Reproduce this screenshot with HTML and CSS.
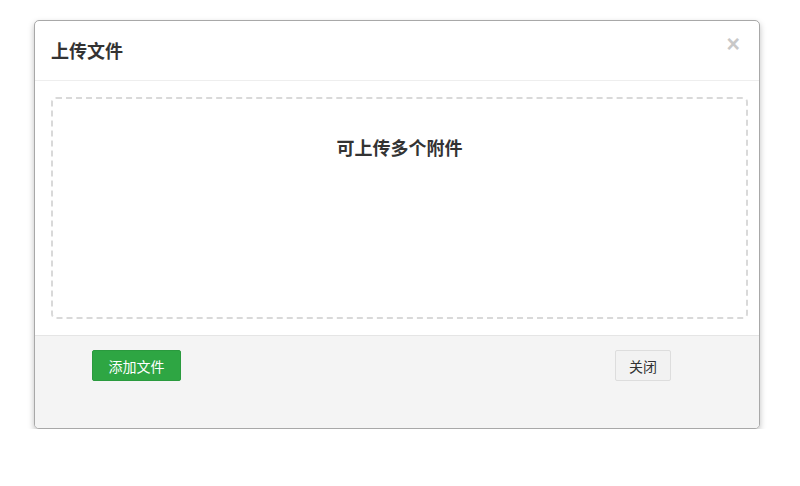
FILE: index.html
```html
<!DOCTYPE html>
<html lang="zh-CN">
<head>
    <meta charset="utf-8">
    <meta name="viewport" content="width=device-width, initial-scale=1.0">
    <title>上传文件</title>
    <link rel="stylesheet" href="styles.css">
</head>
<body>
    <div class="modal">
        <div class="modal-header">
            <h4 class="modal-title">上传文件</h4>
            <span class="close">&times;</span>
        </div>
        <div class="modal-body">
            <div class="dropzone">
                <p class="dz-message">可上传多个附件</p>
            </div>
        </div>
        <div class="modal-footer">
            <button class="btn btn-success">添加文件</button>
            <button class="btn btn-default">关闭</button>
        </div>
    </div>
</body>
</html>
```

FILE: styles.css
```css
*{
    padding: 0;
    margin: 0;
    box-sizing: border-box;
}
body{
    background-color: #ffffff;
    font-family: "Liberation Sans", "Noto Sans CJK SC", sans-serif;
    color: #333333;
    padding: 20px 0 0 34px;
}
.modal{
    width: 726px;
    background-color: #ffffff;
    border: 1px solid #a8a8a8;
    border-radius: 5px;
    box-shadow: 0 3px 6px rgba(0,0,0,0.25);
    overflow: hidden;
}
.modal-header{
    height: 60px;
    padding: 0 16px;
    border-bottom: 1px solid #eeeeee;
    display: flex;
    align-items: center;
    justify-content: space-between;
}
.modal-title{
    font-size: 18px;
    font-weight: 700;
    color: #333333;
    margin-top: -1px;
}
.close{
    font-size: 23px;
    font-weight: 700;
    color: #c8c8c8;
    line-height: 1;
    margin: -12px 3px 0 0;
    cursor: pointer;
}
.modal-body{
    padding: 16px 11px 16px 16px;
    border-bottom: 1px solid #e5e5e5;
}
.dropzone{
    height: 222px;
    border: 2px dashed #d9d9d9;
    border-radius: 5px;
}
.dz-message{
    text-align: center;
    font-size: 18px;
    font-weight: 700;
    color: #333333;
    margin-top: 35px;
}
.modal-footer{
    height: 92px;
    background-color: #f4f4f4;
    padding: 14px 88px 0 57px;
    display: flex;
    align-items: flex-start;
    justify-content: space-between;
}
.btn{
    height: 31px;
    font-family: "Liberation Sans", "Noto Sans CJK SC", sans-serif;
    font-size: 14px;
    border-radius: 2px;
    cursor: pointer;
}
.btn-success{
    width: 89px;
    background-color: #2ea643;
    border: 1px solid #2a9a3e;
    color: #ffffff;
}
.btn-default{
    width: 56px;
    background-color: #f2f2f2;
    border: 1px solid #dddddd;
    color: #333333;
}
```
